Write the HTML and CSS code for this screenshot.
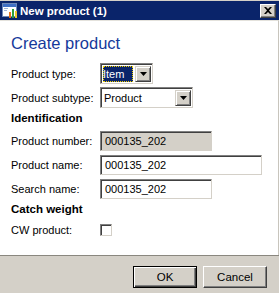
FILE: index.html
```html
<!DOCTYPE html>
<html lang="en">
<head>
    <meta charset="UTF-8">
    <title>New product (1)</title>
    <link rel="stylesheet" href="styles.css">
</head>
<body>
    <div class="window">
        <div class="titlebar">
            <svg class="app-icon" width="16" height="16" viewBox="0 0 16 16">
                <rect x="0.5" y="0.5" width="14" height="13" fill="#fff" stroke="#6d87b8"/>
                <rect x="1" y="1" width="13" height="3" fill="#3f6fc4"/>
                <rect x="2" y="5" width="4" height="1" fill="#9fb3d8"/>
                <rect x="2" y="7" width="3" height="1" fill="#9fb3d8"/>
                <rect x="7" y="9" width="2" height="6" fill="#e8731a"/>
                <rect x="10" y="6" width="2" height="9" fill="#2e9e3a"/>
                <rect x="13" y="8" width="2" height="7" fill="#f2c62c"/>
            </svg>
            <span class="title">New product (1)</span>
            <span class="close">
                <svg width="8" height="7" viewBox="0 0 8 7">
                    <path d="M0 0h2l2 2 2-2h2L5 3.5 8 7H6L4 5 2 7H0l3-3.5z" fill="#000"/>
                </svg>
            </span>
        </div>

        <div class="content">
            <h1>Create product</h1>

            <div class="row row-first">
                <label>Product type:</label>
                <div class="combo combo-type">
                    <span class="combo-value focused">Item</span>
                    <span class="drop"><svg width="7" height="4" viewBox="0 0 7 4"><polygon points="0,0 7,0 3.5,4" fill="#000"/></svg></span>
                </div>
            </div>

            <div class="row row-tight">
                <label>Product subtype:</label>
                <div class="combo combo-subtype">
                    <span class="combo-value">Product</span>
                    <span class="drop"><svg width="7" height="4" viewBox="0 0 7 4"><polygon points="0,0 7,0 3.5,4" fill="#000"/></svg></span>
                </div>
            </div>

            <div class="section">Identification</div>

            <div class="row row-field">
                <label>Product number:</label>
                <div class="field field-short readonly">000135_202</div>
            </div>
            <div class="row row-field">
                <label>Product name:</label>
                <div class="field field-long">000135_202</div>
            </div>
            <div class="row row-field">
                <label>Search name:</label>
                <div class="field field-short">000135_202</div>
            </div>

            <div class="section">Catch weight</div>

            <div class="row row-check">
                <label>CW product:</label>
                <span class="checkbox"></span>
            </div>
        </div>

        <div class="footer">
            <button class="btn btn-default">OK</button>
            <button class="btn">Cancel</button>
        </div>
    </div>
</body>
</html>
```

FILE: styles.css
```css
body {
    margin: 0;
    font-family: "Liberation Sans", Arial, sans-serif;
    font-size: 11px;
    color: #000;
    background: #fff;
}
.window {
    width: 279px;
    height: 293px;
    display: flex;
    flex-direction: column;
    box-sizing: border-box;
}
.titlebar {
    height: 20px;
    box-sizing: border-box;
    border-top: 1px solid #d4d0c8;
    background: #0a246a;
    display: flex;
    align-items: center;
    padding: 0 3px 0 2px;
}
.app-icon {
    display: block;
    margin-right: 2px;
}
.title {
    color: #fff;
    font-weight: bold;
    font-size: 11.5px;
    flex: 1;
}
.close {
    width: 16px;
    height: 14px;
    box-sizing: border-box;
    background: #d4d0c8;
    border-top: 1px solid #fff;
    border-left: 1px solid #fff;
    border-right: 1px solid #404040;
    border-bottom: 1px solid #404040;
    box-shadow: inset -1px -1px #808080;
    display: flex;
    align-items: center;
    justify-content: center;
}
.close svg {
    display: block;
}
.content {
    flex: 1;
    padding-left: 11px;
    border-top: 1px solid #e4e2dc;
    border-right: 1px solid #c8c5bd;
    display: flex;
    flex-direction: column;
}
h1 {
    margin: 12px 0 0;
    font-size: 16.5px;
    line-height: 20px;
    font-weight: normal;
    color: #15399b;
}
.row {
    display: flex;
    align-items: center;
}
.row label {
    width: 89px;
    flex: none;
}
.row-first {
    margin-top: 10px;
    height: 21px;
}
.row-tight {
    margin-top: 3px;
    height: 21px;
}
.row-field {
    margin-top: 4px;
    height: 20px;
}
.row-check {
    margin-top: 3px;
    height: 20px;
}
.section {
    margin-top: 2px;
    line-height: 16px;
    font-size: 11.5px;
    font-weight: bold;
}
.section + .row-field {
    margin-top: 5px;
}

/* sunken boxes */
.combo, .field, .checkbox {
    box-sizing: border-box;
    border-top: 1px solid #808080;
    border-left: 1px solid #808080;
    border-right: 1px solid #d4d0c8;
    border-bottom: 1px solid #d4d0c8;
    box-shadow: inset 1px 1px #404040;
    background: #fff;
}
.combo {
    height: 21px;
    display: flex;
    align-items: stretch;
    padding: 2px 1px 1px 2px;
}
.combo-type {
    width: 53px;
}
.combo-subtype {
    width: 93px;
}
.combo-value {
    flex: 1;
    line-height: 16px;
    padding-left: 1px;
}
.combo-value.focused {
    background: #0a246a;
    color: #fff;
    outline: 1px dotted #f0d000;
    outline-offset: -1px;
    padding-left: 0;
    margin-right: 2px;
}
.drop {
    width: 16px;
    box-sizing: border-box;
    background: #d4d0c8;
    border-top: 1px solid #d4d0c8;
    border-left: 1px solid #d4d0c8;
    border-right: 1px solid #404040;
    border-bottom: 1px solid #404040;
    box-shadow: inset 1px 1px #fff, inset -1px -1px #808080;
    display: flex;
    align-items: center;
    justify-content: center;
}
.drop svg {
    display: block;
}
.field {
    height: 20px;
    line-height: 18px;
    padding-left: 4px;
}
.field-short {
    width: 112px;
}
.field-long {
    width: 162px;
}
.field.readonly {
    background: #d4d0c8;
}
.checkbox {
    width: 12px;
    height: 12px;
}

.footer {
    height: 38px;
    box-sizing: border-box;
    background: #d4d0c8;
    border-top: 1px solid #8a877f;
    display: flex;
    justify-content: flex-end;
    align-items: flex-start;
    padding: 10px 12px 0 0;
    gap: 6px;
}
.btn {
    width: 64px;
    height: 22px;
    box-sizing: border-box;
    margin: 0;
    padding: 0;
    font-family: "Liberation Sans", Arial, sans-serif;
    font-size: 11.5px;
    color: #000;
    background: #d4d0c8;
    border-top: 1px solid #fff;
    border-left: 1px solid #fff;
    border-right: 1px solid #404040;
    border-bottom: 1px solid #404040;
    box-shadow: inset -1px -1px #808080;
}
.btn-default {
    border: 1px solid #000;
    box-shadow: inset 1px 1px #fff, inset -1px -1px #404040, inset -2px -2px #808080;
}
```
